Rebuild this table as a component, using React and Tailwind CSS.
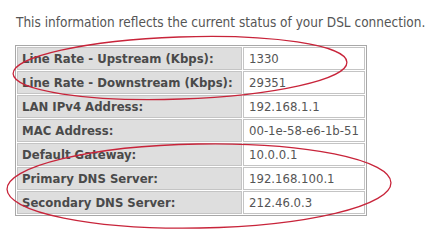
import React from "react";

const rows = [
  ["Line Rate - Upstream (Kbps):", "1330"],
  ["Line Rate - Downstream (Kbps):", "29351"],
  ["LAN IPv4 Address:", "192.168.1.1"],
  ["MAC Address:", "00-1e-58-e6-1b-51"],
  ["Default Gateway:", "10.0.0.1"],
  ["Primary DNS Server:", "192.168.100.1"],
  ["Secondary DNS Server:", "212.46.0.3"],
];

export default function App() {
  return (
    <div
      className="relative w-[432px] h-[243px] overflow-hidden bg-white text-[#555]"
      style={{ fontFamily: '"DejaVu Sans Condensed", "DejaVu Sans", sans-serif' }}
    >
      <p className="pl-[16px] pt-[14px] text-[13.5px] leading-[16px]">
        This information reflects the current status of your DSL connection.
      </p>

      <table className="ml-[15px] mt-[15px] w-[352px] border border-[#a8a8a8] border-separate border-spacing-[1px] text-[13px]">
        <tbody>
          {rows.map(([label, value]) => (
            <tr key={label} className="h-[23px]">
              <td className="w-[225px] bg-[#dedede] border border-[#c4c4c4] pl-[4px] py-0 leading-[20px] font-bold text-[#4a4a4a] whitespace-nowrap">
                {label}
              </td>
              <td className="bg-white border border-[#c4c4c4] pl-[5px] py-0 leading-[20px] whitespace-nowrap">
                {value}
              </td>
            </tr>
          ))}
        </tbody>
      </table>

      {/* hand-drawn red rings around the line rates and the DNS rows */}
      <svg
        className="absolute inset-0 pointer-events-none"
        width="432"
        height="243"
        viewBox="0 0 432 243"
      >
        <ellipse
          cx="180"
          cy="68"
          rx="167"
          ry="31"
          transform="rotate(-2 180 68)"
          fill="none"
          stroke="#c8243a"
          strokeWidth="1.3"
        />
        <ellipse
          cx="199"
          cy="186"
          rx="192"
          ry="42"
          transform="rotate(-1 199 186)"
          fill="none"
          stroke="#c8243a"
          strokeWidth="1.3"
        />
      </svg>
    </div>
  );
}
